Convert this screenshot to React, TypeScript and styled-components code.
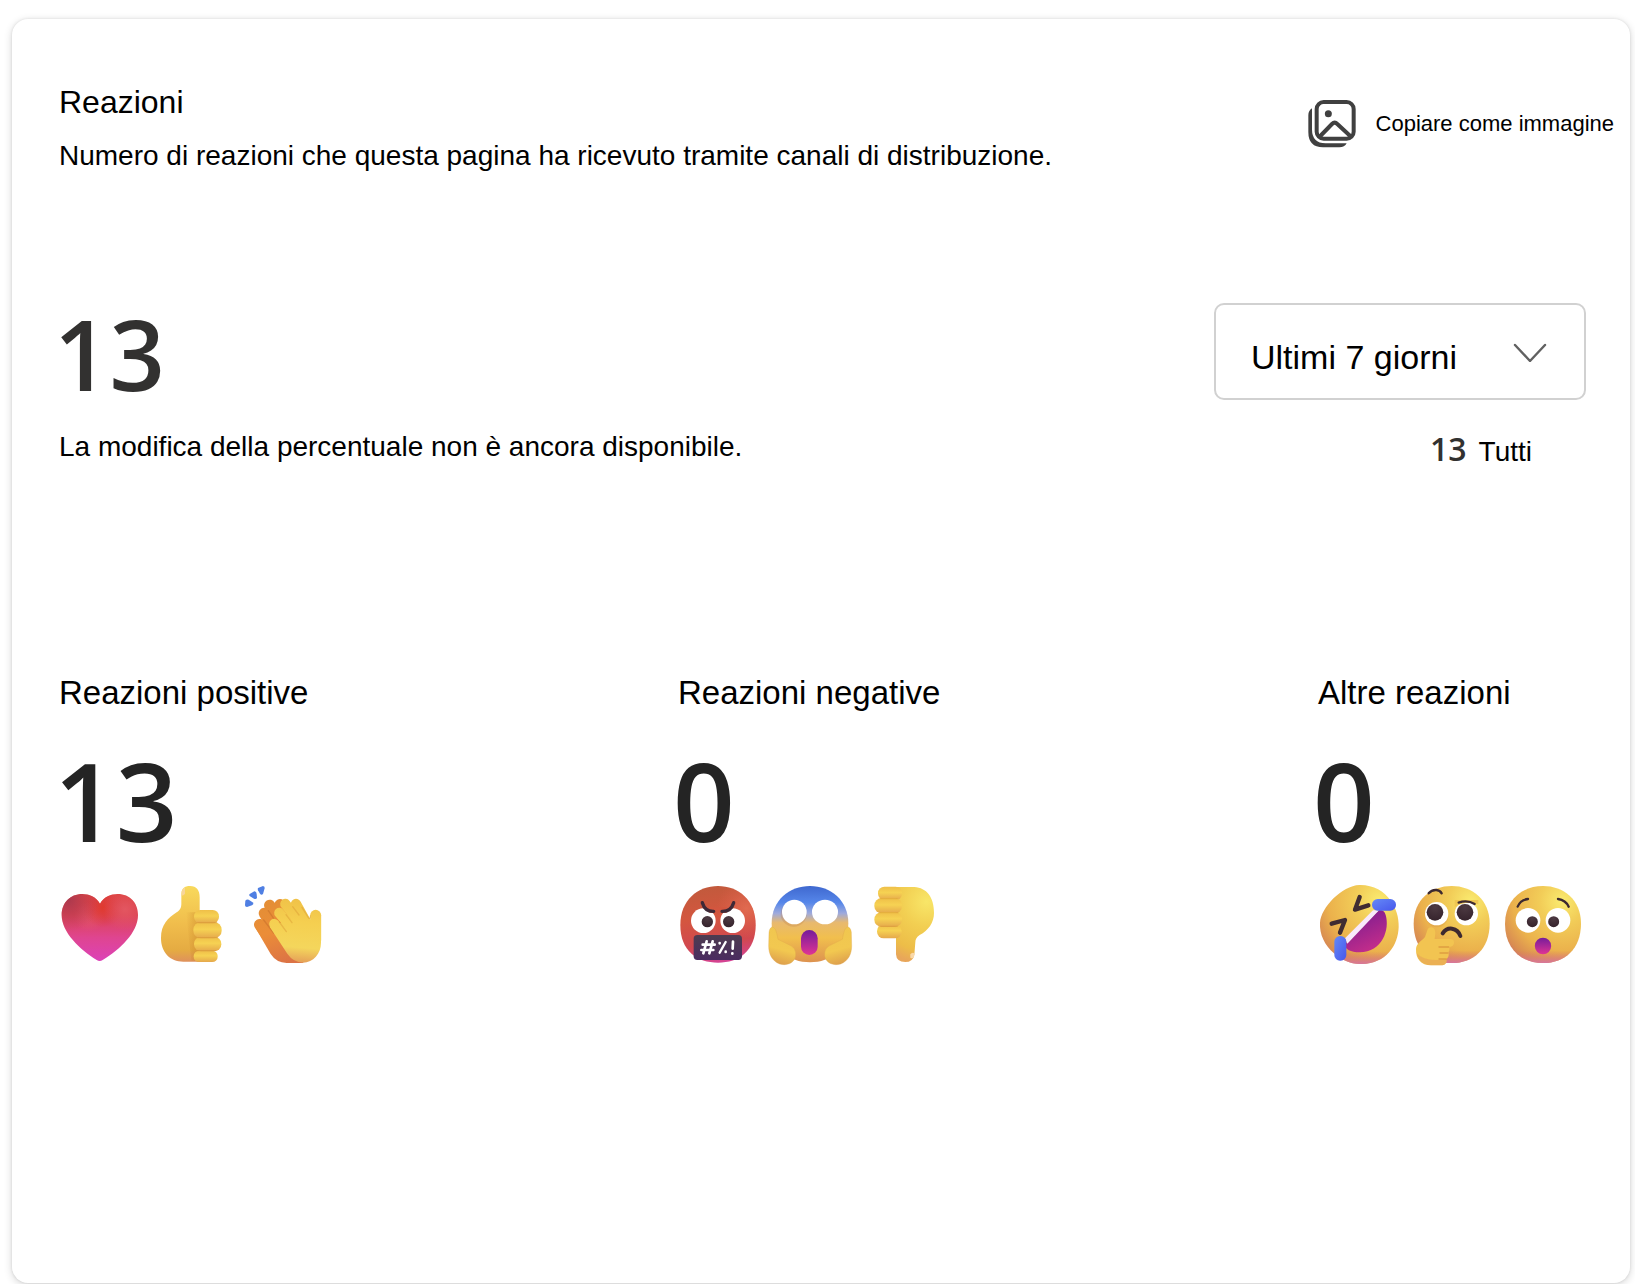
import React from 'react';
import styled, { createGlobalStyle } from 'styled-components';

const GlobalStyle = createGlobalStyle`
  * { box-sizing: border-box; }
  body {
    margin: 0;
    background: #fff;
    color: #000;
    font-family: "Liberation Sans", Arial, sans-serif;
  }
`;

const Page = styled.main`
  display: flex;
  min-height: 100vh;
  padding: 19px 5px 1px 12px;
`;

const Card = styled.section`
  flex: 1;
  min-width: 0;
  padding: 63px 0 48px 47px;
  border-radius: 16px;
  background: #fff;
  box-shadow: 0 2px 8px rgba(0, 0, 0, 0.16), 0 0 3px rgba(0, 0, 0, 0.1);
`;

const Header = styled.header`
  display: flex;
  justify-content: space-between;
  align-items: flex-start;
  padding-right: 16px;
`;

const Title = styled.h2`
  margin: 0;
  font-size: 32px;
  line-height: 40px;
  font-weight: 400;
`;

const GroupTitle = styled.h3`
  margin: 0;
  font-size: 33px;
  line-height: 40px;
  font-weight: 400;
`;

const Description = styled.p<{ $gap: number }>`
  margin: ${(p) => p.$gap}px 0 0;
  font-size: 28px;
  line-height: 36px;
`;

const CopyButton = styled.button`
  display: flex;
  align-items: center;
  gap: 20px;
  height: 48px;
  margin-top: 18px;
  padding: 0;
  border: 0;
  background: none;
  color: inherit;
  font: inherit;
  font-size: 22px;
  white-space: nowrap;
  cursor: pointer;
`;

const Summary = styled.div`
  display: flex;
  justify-content: space-between;
  align-items: flex-start;
  margin-top: 129px;
  padding-right: 44px;
`;

const Figure = styled.div`
  margin-left: -5px;
  font-family: "Open Sans", "Noto Sans", sans-serif;
  font-weight: 600;
  font-size: 97px;
  line-height: 100px;
  color: #323130;
`;

const GroupFigure = styled(Figure)`
  margin-top: 34px;
  font-size: 108px;
  line-height: 108px;
  color: #242424;
`;

const Period = styled.div`
  width: 372px;
`;

const SelectBox = styled.div`
  display: grid;
  align-items: center;
  > * { grid-area: 1 / 1; }
  > svg { justify-self: end; margin-right: 39px; pointer-events: none; }
`;

const Select = styled.select`
  appearance: none;
  width: 100%;
  height: 97px;
  padding: 10px 90px 0 35px;
  border: 2px solid #d1d1d1;
  border-radius: 10px;
  background: #fff;
  color: #000;
  font-family: inherit;
  font-size: 34px;
`;

const AllTime = styled.div`
  display: flex;
  justify-content: flex-end;
  align-items: baseline;
  gap: 12px;
  margin-top: 27px;
  padding-right: 54px;
  font-size: 28px;
  line-height: 44px;
`;

const AllCount = styled.strong`
  font-family: "Open Sans", "Noto Sans", sans-serif;
  font-weight: 600;
  font-size: 32px;
  color: #323130;
`;

const Groups = styled.div`
  display: grid;
  grid-template-columns: 619fr 640fr 268fr;
  margin-top: 199px;
  padding-right: 44px;
`;

const Emojis = styled.div`
  display: flex;
  gap: 12px;
  margin-top: 29px;
`;

const Emoji = styled.svg`
  flex: none;
  width: 80px;
  height: 80px;
  overflow: visible;
`;

const CopyIcon = () => (
  <svg width="48" height="48" viewBox="327 120 144 144" fill="none" aria-hidden="true">
    <rect x="353" y="126" width="111" height="110" rx="21" stroke="#404040" strokeWidth="12" />
    <circle cx="388" cy="161" r="10.5" fill="#404040" />
    <path d="M361 231 L399 192 Q407 184 415 192 L457 231" stroke="#404040" strokeWidth="12" />
    <path d="M339 145 V208 Q339 250 380 250 H443 Q437 262 421 262 H372 Q328 262 328 216 V166 Q328 152 339 145Z" fill="#404040" />
  </svg>
);

const Chevron = () => (
  <svg width="34" height="20" viewBox="0 0 34 20" fill="none" aria-hidden="true">
    <path d="M2 3 L17 19 L32 3" stroke="#616161" strokeWidth="2.4" strokeLinecap="round" strokeLinejoin="round" />
  </svg>
);

const Heart = () => (
  <Emoji viewBox="27 42 240 240" role="img" aria-label="Cuore">
    <defs>
      <linearGradient id="hb" x1="0" y1="0" x2="0" y2="1">
        <stop offset="0" stopColor="#dc4440" />
        <stop offset=".3" stopColor="#dc4350" />
        <stop offset=".65" stopColor="#df4590" />
        <stop offset="1" stopColor="#dc42b8" />
      </linearGradient>
      <radialGradient id="hd" gradientUnits="userSpaceOnUse" cx="55" cy="90" r="95">
        <stop offset="0" stopColor="#9c3550" stopOpacity=".75" />
        <stop offset="1" stopColor="#b03a58" stopOpacity="0" />
      </radialGradient>
      <radialGradient id="hl" gradientUnits="userSpaceOnUse" cx="225" cy="118" r="65">
        <stop offset="0" stopColor="#e6616c" stopOpacity=".65" />
        <stop offset="1" stopColor="#e65a6e" stopOpacity="0" />
      </radialGradient>
      <radialGradient id="hl2" gradientUnits="userSpaceOnUse" cx="118" cy="140" r="45">
        <stop offset="0" stopColor="#e35a70" stopOpacity=".45" />
        <stop offset="1" stopColor="#e96678" stopOpacity="0" />
      </radialGradient>
      <radialGradient id="hr" gradientUnits="userSpaceOnUse" cx="158" cy="112" r="60">
        <stop offset="0" stopColor="#e03a2e" />
        <stop offset="1" stopColor="#dc3a40" stopOpacity="0" />
      </radialGradient>
    </defs>
    {['hb', 'hl2', 'hr', 'hd', 'hl'].map((id) => (
      <path key={id} fill={`url(#${id})`} d="M150 101 C138 80 118 72 97 72 C60 72 35 99 35 135 C35 188 90 238 140 270 Q149 276 158 270 C210 238 264 188 264 135 C264 99 240 72 203 72 C182 72 162 80 150 101Z" />
    ))}
  </Emoji>
);

const ThumbUp = () => (
  <Emoji viewBox="303 42 240 240" role="img" aria-label="Pollice in su">
    <defs>
      <linearGradient id="tu" x1="0" y1="0" x2="0" y2="1">
        <stop offset="0" stopColor="#f8d95c" />
        <stop offset=".5" stopColor="#f0bd4c" />
        <stop offset=".85" stopColor="#e5ab42" />
        <stop offset="1" stopColor="#df915c" />
      </linearGradient>
      <linearGradient id="tush" x1="0" y1="0" x2="1" y2="0">
        <stop offset="0" stopColor="#c98528" stopOpacity="0" />
        <stop offset="1" stopColor="#c98528" stopOpacity=".55" />
      </linearGradient>
      <linearGradient id="tuf" x1="0" y1="0" x2="0" y2="1">
        <stop offset="0" stopColor="#efbf48" />
        <stop offset=".45" stopColor="#f6d253" />
        <stop offset="1" stopColor="#e5a84c" />
      </linearGradient>
    </defs>
    <path fill="url(#tu)" d="M394 72 C394 56 404 48 420 48 C440 48 449 61 449 82 V130 L470 275 H400 C360 275 333 247 333 204 C333 164 354 144 380 127 C391 120 394 112 394 101Z" />
    <path fill="#f8d6a3" opacity=".85" d="M395 76 V66 Q397 55 405 53 V71 Q402 77 395 76Z" />
    <path fill="url(#tush)" d="M408 127 H450 V272 H424Z" />
    <rect x="431" y="242" width="72" height="34" rx="16" fill="url(#tuf)" />
    <rect x="432" y="200" width="82" height="44" rx="21" fill="url(#tuf)" />
    <rect x="430" y="156" width="85" height="49" rx="23" fill="url(#tuf)" />
    <rect x="432" y="120" width="75" height="40" rx="19" fill="url(#tuf)" />
    <path d="M443 158 H500 M444 203 H503 M444 242 H497" stroke="#d5912d" strokeWidth="3" strokeLinecap="round" opacity=".5" />
  </Emoji>
);

const Clap = () => (
  <Emoji viewBox="579 42 240 240" role="img" aria-label="Applauso">
    <defs>
      <linearGradient id="cb" gradientUnits="userSpaceOnUse" x1="640" y1="90" x2="700" y2="280">
        <stop offset="0" stopColor="#e38e35" />
        <stop offset=".5" stopColor="#eb8d38" />
        <stop offset="1" stopColor="#dc7345" />
      </linearGradient>
      <linearGradient id="cf" gradientUnits="userSpaceOnUse" x1="760" y1="90" x2="744" y2="280">
        <stop offset="0" stopColor="#f0c248" />
        <stop offset=".35" stopColor="#f5cf50" />
        <stop offset=".75" stopColor="#f4d65c" />
        <stop offset="1" stopColor="#e49c58" />
      </linearGradient>
    </defs>
    <g fill="#4f7fe3">
      <path d="M586 92 Q590 87 596 89 L610 98 Q611 103 606 106 L591 111 Q585 111 585 106Z" />
      <path d="M599 72 L613 64 Q620 65 620 72 L621 84 Q618 89 612 86 L600 79 Q596 75 599 72Z" />
      <path d="M624 54 L639 48 Q645 49 644 55 L639 72 Q634 77 630 71 L624 61 Q622 57 624 54Z" />
    </g>
    <g stroke="url(#cb)" strokeWidth="34" strokeLinecap="round" fill="none">
      <path d="M629 164 L684 245" />
      <path d="M643 130 L696 216" />
      <path d="M659 106 L716 200" />
      <path d="M690 104 L730 180" />
    </g>
    <path fill="url(#cb)" d="M617 175 L662 252 Q679 278 710 279 H760 L710 150Z" />
    <path d="M641 150 L671 189 M655 122 L674 150" stroke="#c46e2b" strokeWidth="4" strokeLinecap="round" opacity=".5" />
    <g stroke="url(#cf)" strokeWidth="31" strokeLinecap="round" fill="none">
      <path d="M706 102 L766 178" />
      <path d="M738 102 L780 178" />
      <path d="M688 129 L745 196" />
      <path d="M673 162 L724 230" />
      <path d="M797 136 V210" strokeWidth="33" />
    </g>
    <path fill="url(#cf)" d="M659 170 L712 251 Q730 277 759 278 C790 277 813 251 813 218 V137 L779 155 L730 145Z" />
    <path d="M688 156 L709 185 M708 134 L726 158 M728 110 L747 135 M756 112 L776 144 Q781 148 781 138" stroke="#d99a32" strokeWidth="4" strokeLinecap="round" fill="none" opacity=".45" />
  </Emoji>
);

const Swearing = () => (
  <Emoji viewBox="24 42 240 240" role="img" aria-label="Arrabbiato">
    <defs>
      <linearGradient id="sw" x1=".35" y1="0" x2=".5" y2="1">
        <stop offset="0" stopColor="#c15a3c" />
        <stop offset=".4" stopColor="#d4563f" />
        <stop offset=".75" stopColor="#d1484f" />
        <stop offset="1" stopColor="#d44394" />
      </linearGradient>
      <radialGradient id="swh" gradientUnits="userSpaceOnUse" cx="230" cy="115" r="90">
        <stop offset="0" stopColor="#e67358" stopOpacity=".7" />
        <stop offset="1" stopColor="#e3644f" stopOpacity="0" />
      </radialGradient>
      <radialGradient id="pupil" cx=".5" cy=".2" r=".9">
        <stop offset="0" stopColor="#4d3a42" />
        <stop offset="1" stopColor="#33212a" />
      </radialGradient>
      <linearGradient id="plate" x1="0" y1="0" x2="0" y2="1">
        <stop offset="0" stopColor="#4e3c50" />
        <stop offset="1" stopColor="#4b2c60" />
      </linearGradient>
    </defs>
    {['sw', 'swh'].map((id) => (
      <path key={id} fill={`url(#${id})`} d="M144 48 C205 48 257 90 257 165 C257 243 207 278 144 278 C81 278 31 243 31 165 C31 90 83 48 144 48Z" />
    ))}
    <circle cx="100" cy="152" r="37" fill="#fff" />
    <circle cx="188" cy="152" r="37" fill="#fff" />
    <path d="M118 112 H170 V129 H118Z" fill="#d3563f" />
    <circle cx="112" cy="155" r="17" fill="url(#pupil)" />
    <circle cx="176" cy="155" r="17" fill="url(#pupil)" />
    <path d="M97 98 Q105 125 131 124 M191 98 Q183 125 156 124" stroke="#3d2937" strokeWidth="10" strokeLinecap="round" fill="none" />
    <rect x="71" y="195" width="145" height="75" rx="11" fill="url(#plate)" />
    <g stroke="#fff" strokeWidth="8" strokeLinecap="round" fill="none">
      <path d="M110 214 L100 250 M128 214 L118 250 M98 224 H134 M94 240 H130" />
      <path d="M167 216 L149 248" strokeWidth="7" />
      <path d="M149 219 V220 M167 245 V246 M187 250 V251" />
      <path d="M189 215 L188 236" />
    </g>
  </Emoji>
);

const Scream = () => (
  <Emoji viewBox="300 42 240 240" role="img" aria-label="Spaventato">
    <defs>
      <linearGradient id="sc" x1="0" y1="0" x2="0" y2="1">
        <stop offset="0" stopColor="#3f68cf" />
        <stop offset=".22" stopColor="#5687ea" />
        <stop offset=".36" stopColor="#9faadb" />
        <stop offset=".48" stopColor="#e8b96e" />
        <stop offset=".68" stopColor="#f1bf4d" />
        <stop offset="1" stopColor="#dd9250" />
      </linearGradient>
      <linearGradient id="mouth" x1="0" y1="0" x2="0" y2="1">
        <stop offset="0" stopColor="#751c9b" />
        <stop offset="1" stopColor="#e03494" />
      </linearGradient>
      <linearGradient id="sch" x1=".6" y1="0" x2=".4" y2="1">
        <stop offset="0" stopColor="#f0c64f" />
        <stop offset=".6" stopColor="#f2c850" />
        <stop offset="1" stopColor="#dd9e4d" />
      </linearGradient>
    </defs>
    <path fill="url(#sc)" d="M420 48 C482 48 535 91 535 160 C535 239 483 277 420 277 C357 277 305 239 305 160 C305 91 358 48 420 48Z" />
    <ellipse cx="371" cy="132" rx="39" ry="38" fill="#b97845" opacity=".25" />
    <circle cx="373" cy="126" r="37" fill="#fff" />
    <ellipse cx="465" cy="126" rx="39" ry="37" fill="#fff" />
    <rect x="393" y="180" width="50" height="75" rx="25" fill="url(#mouth)" />
    <path id="palm" fill="url(#sch)" stroke="#dea548" strokeWidth="1" d="M309 171 Q318 174 321 193 L324 208 L354 223 Q380 232 377 258 C373 280 350 288 329 282 C306 273 296 252 296 228 L297 187 Q299 171 309 171Z" />
    <use href="#palm" transform="translate(841 0) scale(-1 1)" />
  </Emoji>
);

const ThumbDown = () => (
  <Emoji viewBox="576 42 240 240" role="img" aria-label="Pollice in giù">
    <defs>
      <radialGradient id="td" gradientUnits="userSpaceOnUse" cx="770" cy="95" r="185">
        <stop offset="0" stopColor="#f8e668" />
        <stop offset=".4" stopColor="#f2cf52" />
        <stop offset=".8" stopColor="#edbd48" />
        <stop offset="1" stopColor="#e8a65a" />
      </radialGradient>
    </defs>
    <path fill="url(#td)" d="M650 51 H733 C770 53 792 82 792 128 C792 158 775 181 749 195 Q736 203 736 217 L733 254 Q729 276 706 276 Q679 276 678 253 V200Z" />
    <path fill="#f9d8a9" d="M721 263 V253 Q727 245 734 251 L732 260 Q728 268 721 263Z" />
    <rect x="621" y="163" width="74" height="42" rx="20" fill="url(#tuf)" />
    <rect x="624" y="50" width="72" height="40" rx="19" fill="url(#tuf)" />
    <rect x="613" y="84" width="83" height="46" rx="22" fill="url(#tuf)" />
    <rect x="613" y="126" width="83" height="45" rx="22" fill="url(#tuf)" />
    <path d="M632 86 H682 M629 128 H684 M632 169 H682" stroke="#d5962f" strokeWidth="3" strokeLinecap="round" opacity=".45" />
  </Emoji>
);

const Rofl = () => (
  <Emoji viewBox="39 42 240 240" role="img" aria-label="Risata">
    <defs>
      <radialGradient id="face" cx=".75" cy=".2" r=".95">
        <stop offset="0" stopColor="#faeb70" />
        <stop offset=".3" stopColor="#f2cd58" />
        <stop offset=".68" stopColor="#ebb14c" />
        <stop offset=".9" stopColor="#d98d52" />
        <stop offset="1" stopColor="#cd7364" />
      </radialGradient>
      <linearGradient id="laugh" gradientUnits="userSpaceOnUse" x1="165" y1="150" x2="210" y2="245">
        <stop offset="0" stopColor="#8b208f" />
        <stop offset="1" stopColor="#c82e8a" />
      </linearGradient>
      <linearGradient id="tear" x1="0" y1="0" x2="1" y2="1">
        <stop offset="0" stopColor="#6489f7" />
        <stop offset="1" stopColor="#4857eb" />
      </linearGradient>
      <linearGradient id="blush" x1="0" y1="0" x2="0" y2="1">
        <stop offset=".84" stopColor="#dc7565" stopOpacity="0" />
        <stop offset="1" stopColor="#d7769d" />
      </linearGradient>
    </defs>
    {['face', 'blush'].map((id) => (
      <path key={id} fill={`url(#${id})`} d="M163 45 C205 44 237 63 257 92 C273 114 282 141 281 172 C279 226 244 281 170 282 C137 283 110 271 87 250 C59 225 43 193 45 158 C48 112 111 47 163 45Z" />
    ))}
    <path fill="url(#laugh)" d="M222 120 Q238 119 242 135 C255 178 232 247 164 247 Q122 245 118 224Z" />
    <path fill="#f8e9fb" d="M204 121 L222 121 L127 221 L120 205Z" />
    <path d="M164 81 L150 119 L190 106 M80 161 L120 150 L105 188" stroke="#402c32" strokeWidth="13" strokeLinecap="round" strokeLinejoin="round" fill="none" />
    <rect x="201" y="87" width="72" height="35" rx="17" fill="url(#tear)" />
    <rect x="88" y="198" width="36" height="74" rx="17" fill="url(#tear)" />
  </Emoji>
);

const roundFace = (x: number) =>
  `M${x} 48 c61 0 114 40 114 113 c0 75 -48 118 -114 118 c-66 0 -114 -43 -114 -118 c0 -73 53 -113 114 -113Z`;

const Thinking = () => (
  <Emoji viewBox="315 42 240 240" role="img" aria-label="Pensieroso">
    <path fill="url(#face)" d={roundFace(440)} />
    <path fill="url(#blush)" d={roundFace(440)} />
    <ellipse cx="396" cy="136" rx="34" ry="36" fill="#cb8742" opacity=".25" />
    <circle cx="395" cy="131" r="35" fill="#fff" />
    <circle cx="484" cy="131" r="35" fill="#fff" />
    <path d="M449 90 H520 V103 Q485 91 449 111Z" fill="#efc652" />
    <circle cx="390" cy="127" r="25" fill="url(#pupil)" />
    <circle cx="480" cy="127" r="25" fill="url(#pupil)" />
    <path d="M371 70 Q380 59 394 60 Q405 61 410 70 M461 98 Q487 89 509 102" stroke="#3d2930" strokeWidth="7" strokeLinecap="round" fill="none" />
    <path d="M413 190 Q423 174 441 176 Q460 179 466 198" stroke="#3d2930" strokeWidth="12" strokeLinecap="round" fill="none" />
    <path fill="#f2c451" d="M366 184 Q369 171 380 172 Q391 174 391 190 L389 207 H438 Q448 209 447 219 Q446 229 433 231 Q435 240 430 248 Q434 258 425 267 Q426 284 412 286 H378 C348 286 332 266 333 237 C334 219 350 214 360 201Z" />
    <path fill="#df8c5d" opacity=".35" d="M335 249 Q358 277 425 267 Q426 284 412 286 H378 Q342 284 335 249Z" />
    <path d="M402 231 H431 M405 249 H428 M402 267 H424" stroke="#da943e" strokeWidth="4" strokeLinecap="round" opacity=".8" />
  </Emoji>
);

const Astonished = () => (
  <Emoji viewBox="591 42 240 240" role="img" aria-label="Sorpreso">
    <path fill="url(#face)" d={roundFace(714)} />
    <path fill="url(#blush)" d={roundFace(714)} />
    <circle cx="669" cy="151" r="37" fill="#fff" />
    <circle cx="759" cy="151" r="37" fill="#fff" />
    <circle cx="682" cy="155" r="16.5" fill="url(#pupil)" />
    <circle cx="746" cy="155" r="16.5" fill="url(#pupil)" />
    <path d="M638 110 Q646 90 669 87 M791 110 Q782 90 759 87" stroke="#3d2930" strokeWidth="7" strokeLinecap="round" fill="none" />
    <ellipse cx="714" cy="228" rx="24.5" ry="25" fill="url(#mouth)" />
  </Emoji>
);

const groups = [
  { title: 'Reazioni positive', count: 13, icons: [Heart, ThumbUp, Clap] },
  { title: 'Reazioni negative', count: 0, icons: [Swearing, Scream, ThumbDown] },
  { title: 'Altre reazioni', count: 0, icons: [Rofl, Thinking, Astonished] },
];

export default function App() {
  return (
    <>
      <GlobalStyle />
      <Page>
        <Card>
          <Header>
            <div>
              <Title>Reazioni</Title>
              <Description $gap={16}>
                Numero di reazioni che questa pagina ha ricevuto tramite canali di distribuzione.
              </Description>
            </div>
            <CopyButton type="button">
              <CopyIcon />
              Copiare come immagine
            </CopyButton>
          </Header>
          <Summary>
            <div>
              <Figure>13</Figure>
              <Description $gap={26}>La modifica della percentuale non è ancora disponibile.</Description>
            </div>
            <Period>
              <SelectBox>
                <Select aria-label="Periodo" defaultValue="7">
                  <option value="7">Ultimi 7 giorni</option>
                </Select>
                <Chevron />
              </SelectBox>
              <AllTime>
                <AllCount>13</AllCount>
                <span>Tutti</span>
              </AllTime>
            </Period>
          </Summary>
          <Groups>
            {groups.map((group) => (
              <section key={group.title}>
                <GroupTitle>{group.title}</GroupTitle>
                <GroupFigure>{group.count}</GroupFigure>
                <Emojis>
                  {group.icons.map((Icon, i) => (
                    <Icon key={i} />
                  ))}
                </Emojis>
              </section>
            ))}
          </Groups>
        </Card>
      </Page>
    </>
  );
}
